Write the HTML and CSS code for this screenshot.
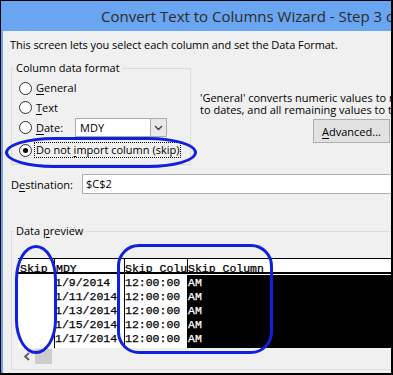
FILE: index.html
```html
<!DOCTYPE html>
<html lang="en">
<head>
<meta charset="utf-8">
<title>Convert Text to Columns Wizard</title>
<link rel="stylesheet" href="styles.css">
</head>
<body>
<div class="window">
  <div class="titlebar">Convert Text to Columns Wizard - Step 3 of 3</div>
  <div class="content">
    <p class="intro">This screen lets you select each column and set the Data Format.</p>
    <div class="top">
      <div class="group format">
        <div class="group-title">Column data format</div>
        <div class="opt opt-general"><span class="radio"></span><span class="lbl"><u>G</u>eneral</span></div>
        <div class="opt opt-text"><span class="radio"></span><span class="lbl"><u>T</u>ext</span></div>
        <div class="opt opt-date"><span class="radio"></span><span class="lbl date-lbl"><u>D</u>ate:</span>
          <div class="combo"><span>MDY</span><span class="combo-btn"><svg width="9" height="6" viewBox="0 0 9 6"><path d="M1 1 L4.5 4.5 L8 1" stroke="#404040" stroke-width="1.4" fill="none"/></svg></span></div>
        </div>
        <div class="opt opt-skip"><span class="radio on"></span><span class="lbl focus">Do not <u>i</u>mport column (skip)</span></div>
      </div>
      <div class="side">
        <p class="desc">'General' converts numeric values to numbers, date values<br>to dates, and all remaining values to text.</p>
        <div class="btn"><span><u>A</u>dvanced...</span></div>
      </div>
    </div>
    <div class="dest">
      <span class="dest-lbl">D<u>e</u>stination:</span>
      <div class="textbox">$C$2</div>
    </div>
    <div class="group preview">
      <div class="group-title">Data <u>p</u>review</div>
      <div class="grid">
        <div class="grid-head">
          <div class="hc c1">Skip</div>
          <div class="hc c2">MDY</div>
          <div class="hc c3">Skip Column</div>
          <div class="hc c4">Skip Column</div>
        </div>
        <div class="grid-body">
          <div class="bcol b1"></div>
          <div class="bcol b2">1/9/2014<br>1/11/2014<br>1/13/2014<br>1/15/2014<br>1/17/2014</div>
          <div class="bcol b3">12:00:00<br>12:00:00<br>12:00:00<br>12:00:00<br>12:00:00</div>
          <div class="bcol b4">AM<br>AM<br>AM<br>AM<br>AM</div>
        </div>
        <div class="hscroll">
          <span class="sb-arrow"><svg width="8" height="9" viewBox="0 0 8 9"><path d="M6 1 L2.2 4.5 L6 8" stroke="#606060" stroke-width="2" fill="none"/></svg></span>
          <span class="sb-thumb"></span>
        </div>
      </div>
    </div>
  </div>
  <div class="mark mark-opt"></div>
  <div class="mark mark-skip"></div>
  <div class="mark mark-cols"></div>
</div>
</body>
</html>
```
FILE: styles.css
```css
* { box-sizing: border-box; }
html, body { margin: 0; padding: 0; background: #fff; }
body { font-family: "Open Sans", "Noto Sans", sans-serif; }

.window {
  position: relative;
  width: 393px;
  height: 375px;
  border: 1px solid #000;
  border-right-width: 2px;
  border-bottom-width: 2px;
  background: #69a5f0;
  display: flex;
  flex-direction: column;
  overflow: hidden;
}

.titlebar {
  flex: none;
  height: 30px;
  padding-left: 100px;
  white-space: nowrap;
  overflow: hidden;
  font-size: 15px;
  line-height: 31px;
  color: #2b2b2b;
}

.content {
  flex: 1;
  margin-left: 2px;
  background: #f0f0f0;
  overflow: hidden;
  font-size: 11px;
  color: #000;
  white-space: nowrap;
}

u { text-decoration-thickness: 1px; text-underline-offset: 2px; }

.intro { margin: 6px 0 0 7px; line-height: 16px; letter-spacing: -0.06px; }

.top { display: flex; align-items: flex-start; margin-top: 15px; padding-left: 8px; }

.group { border: 1px solid #dcdcdc; }
.group-title {
  width: max-content;
  line-height: 16px;
  margin: -9px 0 0 -5px;
  padding: 0 2px;
  background: #f0f0f0;
}

.format { flex: none; width: 180px; padding: 0 0 6px 7px; }

.opt { display: flex; align-items: center; }
.opt-general { margin-top: 3px; height: 18px; }
.opt-text { margin-top: 1px; height: 19px; }
.opt-date { margin-top: 1px; height: 19px; }
.opt-skip { margin-top: 5px; height: 16px; }

.radio {
  flex: none;
  width: 13px;
  height: 13px;
  border: 1px solid #333;
  border-radius: 50%;
  background: #fff;
  display: flex;
  align-items: center;
  justify-content: center;
}
.radio.on::after {
  content: "";
  width: 5px;
  height: 5px;
  border-radius: 50%;
  background: #000;
}

.lbl { margin-left: 4px; line-height: 16px; }
.date-lbl { width: 39px; flex: none; }
.focus { margin-left: 2px; border: 1px dotted #000; padding: 0 1px; line-height: 14px; }

.combo {
  flex: none;
  width: 92px;
  height: 19px;
  border: 1px solid #acacac;
  background: #fff;
  display: flex;
  align-items: center;
  padding-left: 4px;
}
.combo-btn {
  margin-left: auto;
  width: 16px;
  height: 17px;
  background: #e8e8e8;
  border-left: 1px solid #acacac;
  display: flex;
  align-items: center;
  justify-content: center;
}

.side { flex: none; margin: 24px 0 0 9px; }
.desc { margin: 0; line-height: 12px; }
.btn {
  display: flex;
  align-items: center;
  justify-content: center;
  width: 77px;
  height: 24px;
  margin: 3px 0 0 113px;
  background: #e1e1e1;
  border: 1px solid #adadad;
}

.dest { display: flex; align-items: center; margin-top: 9px; padding-left: 8px; }
.dest-lbl { width: 71px; flex: none; }
.textbox {
  flex: none;
  width: 400px;
  height: 20px;
  border: 1px solid #abadb3;
  background: #fff;
  padding-left: 3px;
  line-height: 18px;
}

.preview { width: 420px; margin: 37px 0 0 8px; padding: 0 0 4px 6px; }
.preview .group-title { margin-left: -4px; }

.grid {
  margin-top: 19px;
  font-family: "Liberation Mono", "Courier New", monospace;
  font-size: 11.5px;
  -webkit-text-stroke: 0.25px;
}
.grid-head {
  display: flex;
  height: 16px;
  border-top: 1px solid #000;
  border-bottom: 2px solid #000;
  background: #fff;
}
.hc {
  flex: none;
  height: 13px;
  overflow: hidden;
  padding-top: 3px;
  line-height: 13px;
  border-right: 1px solid #000;
}
.c1 { width: 37px; padding-left: 2px; }
.c2 { width: 70px; padding-left: 1px; }
.c3 { width: 63px; }
.c4 { flex: 1; border-right: 0; }

.grid-body { display: flex; height: 74px; background: #fff; }
.bcol { flex: none; padding-top: 2px; line-height: 14px; overflow: hidden; }
.b1 { width: 37px; border-right: 1px solid #000; }
.b2 { width: 70px; border-right: 1px solid #000; }
.b3 { width: 62px; }
.b4 { flex: 1; background: #000; color: #fff; padding-left: 1px; border-top: 1px solid #fff; padding-top: 1px; }

.hscroll { display: flex; height: 17px; }
.sb-arrow { width: 17px; display: flex; align-items: center; justify-content: center; }
.sb-thumb { width: 17px; height: 15px; margin-top: 1px; background: #cdcdcd; }

.mark { position: absolute; border: 3px solid #1020e0; }
.mark-opt { left: 4px; top: 136px; width: 192px; height: 31px; border-radius: 50px / 16px; }
.mark-skip { left: 14px; top: 244px; width: 42px; height: 109px; border-radius: 21px / 34px; }
.mark-cols { left: 116px; top: 243px; width: 156px; height: 110px; border-radius: 22px; }
```
